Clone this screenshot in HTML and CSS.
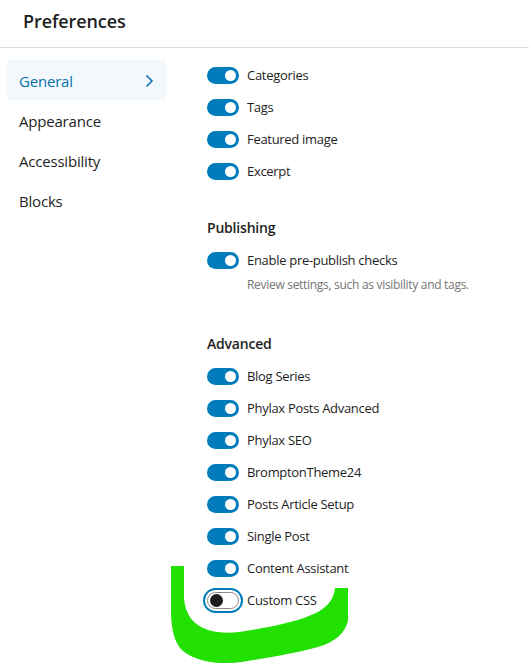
FILE: index.html
```html
<!DOCTYPE html>
<html>
<head>
<meta charset="utf-8">
<link rel="stylesheet" href="styles.css">
</head>
<body>
<div class="modal">
  <header class="header"><h1 class="title">Preferences</h1></header>
  <div class="main">
    <nav class="sidebar">
      <div class="nav-item active"><span>General</span>
        <svg class="chev" width="10" height="14" viewBox="0 0 10 14"><path d="M2.5 1.5 L8 7 L2.5 12.5" fill="none" stroke="#0a70ad" stroke-width="1.6"/></svg>
      </div>
      <div class="nav-item">Appearance</div>
      <div class="nav-item">Accessibility</div>
      <div class="nav-item">Blocks</div>
    </nav>
    <section class="content">
      <div class="row"><span class="toggle on"></span><span>Categories</span></div>
      <div class="row"><span class="toggle on"></span><span>Tags</span></div>
      <div class="row"><span class="toggle on"></span><span>Featured image</span></div>
      <div class="row"><span class="toggle on"></span><span>Excerpt</span></div>

      <h2 class="heading heading-first">Publishing</h2>
      <div class="row"><span class="toggle on"></span><span>Enable pre-publish checks</span></div>
      <p class="help">Review settings, such as visibility and tags.</p>

      <h2 class="heading heading-second">Advanced</h2>
      <div class="row"><span class="toggle on"></span><span>Blog Series</span></div>
      <div class="row"><span class="toggle on"></span><span>Phylax Posts Advanced</span></div>
      <div class="row"><span class="toggle on"></span><span>Phylax SEO</span></div>
      <div class="row"><span class="toggle on"></span><span>BromptonTheme24</span></div>
      <div class="row"><span class="toggle on"></span><span>Posts Article Setup</span></div>
      <div class="row"><span class="toggle on"></span><span>Single Post</span></div>
      <div class="row"><span class="toggle on"></span><span>Content Assistant</span></div>
      <div class="row"><span class="toggle off focus"></span><span>Custom CSS</span></div>
    </section>
  </div>
  <svg class="scribble" width="529" height="666" viewBox="0 0 529 666">
    <path d="M171 566 L184 566 L184 598 C185 614 193 625 208 630 C222 634 236 633 252 630 C275 626 300 621 318 612 C330 605 334 597 335 588 L348 588 L348 621 C345 633 335 642 318 647 C298 653 270 657 242 662 C220 665 197 662 183 651 C174 643 171 628 171 610 Z" fill="#22e000"/>
  </svg>
</div>
</body>
</html>
```

FILE: styles.css
```css
* { box-sizing: border-box; }
html, body { margin: 0; padding: 0; background: #fff; }
body {
  font-family: "Open Sans", "Noto Sans", sans-serif;
  color: #1e1e1e;
  width: 529px;
  height: 666px;
  overflow: hidden;
}
.modal { position: relative; height: 666px; display: flex; flex-direction: column; }
.header {
  height: 48px;
  border-bottom: 1px solid #dcdcdc;
  display: flex;
  align-items: center;
  padding: 0 0 5px 23px;
  flex: none;
}
.title { margin: 0; font-size: 18px; font-weight: 600; letter-spacing: -0.1px; color: #1e1e1e; }
.main { flex: 1; display: flex; overflow: hidden; }
.sidebar { width: 166px; padding: 12px 0 0 7px; flex: none; }
.nav-item {
  height: 40px;
  display: flex;
  align-items: center;
  justify-content: space-between;
  padding: 1px 12px 0 12px;
  font-size: 15px;
  letter-spacing: -0.2px;
  color: #1e1e1e;
}
.nav-item.active { background: #f2f8fc; color: #0a70ad; }
.content { margin-left: 41px; padding-top: 11px; font-size: 13px; letter-spacing: -0.3px; flex: 1; }
.row { height: 32px; display: flex; align-items: center; gap: 8px; }
.toggle {
  position: relative;
  width: 32px; height: 17px;
  border-radius: 9px;
  flex: none;
}
.toggle.on { background: #007cba; }
.toggle.on::after {
  content: ""; position: absolute; right: 3px; top: 3px;
  width: 11px; height: 11px; border-radius: 50%; background: #fff;
}
.toggle.off { background: #fff; border: 1px solid #8a8a8a; }
.toggle.off::after {
  content: ""; position: absolute; left: 2px; top: 1px;
  width: 13px; height: 13px; border-radius: 50%; background: #1e1e1e;
}
.toggle.focus { box-shadow: 0 0 0 2px #fff, 0 0 0 4px #007cba; }
.heading { margin: 0; font-size: 14px; font-weight: 600; line-height: 20px; letter-spacing: -0.2px; }
.heading-first { margin-top: 31px; margin-bottom: 6px; }
.heading-second { margin-top: 41px; margin-bottom: 6px; }
.help { margin: 1px 0 0 40px; font-size: 12px; line-height: 16px; color: #757575; }
.scribble { position: absolute; left: 0; top: 0; pointer-events: none; }
```
